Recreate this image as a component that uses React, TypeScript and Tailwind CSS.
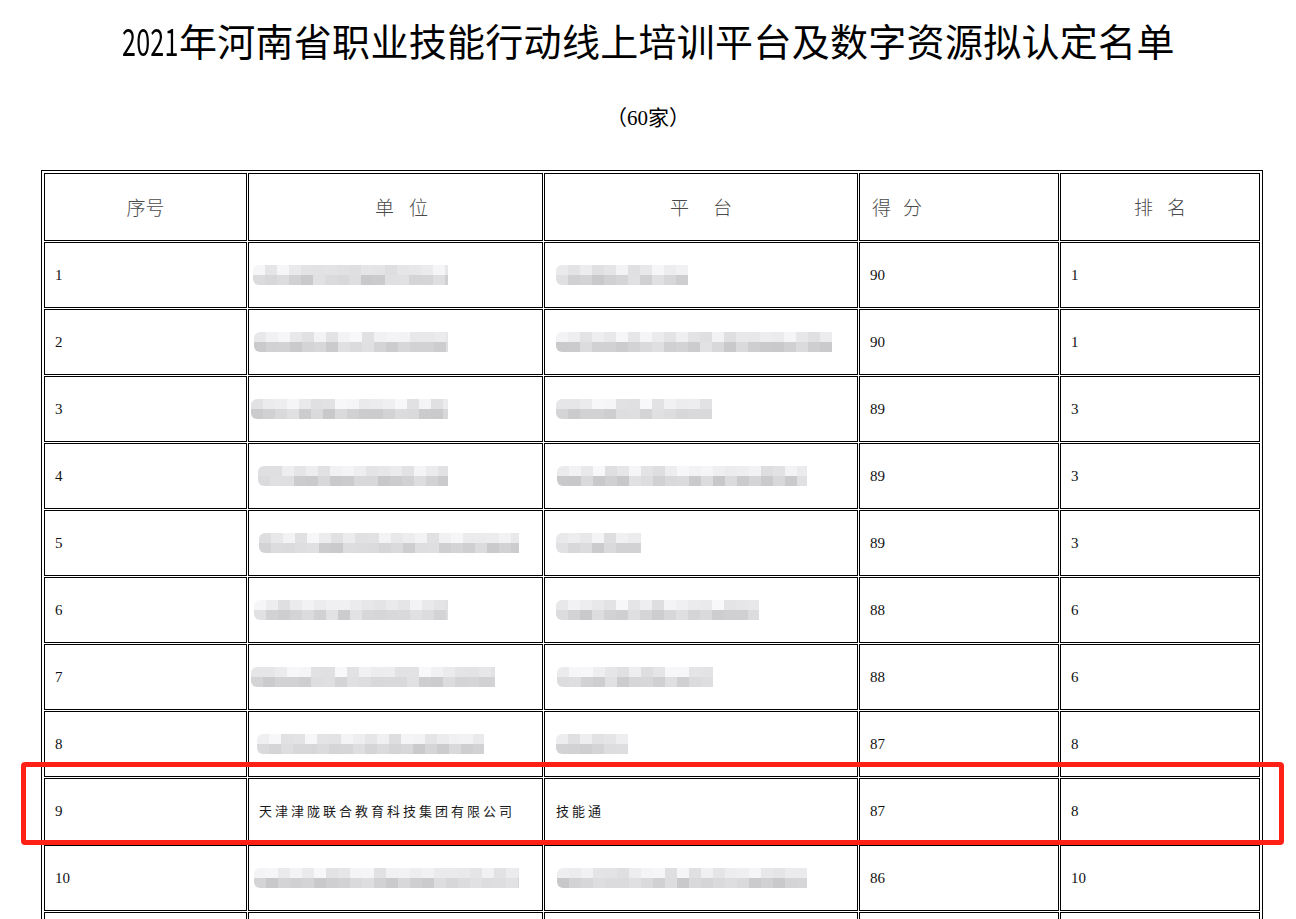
import React from 'react';

type Bar = { x: number; w: number };
type Row = { n: string; unit?: Bar; plat?: Bar; unitText?: string; platText?: string; score: string; rank: string };

const rows: Row[] = [
  { n: '1', unit: { x: 4, w: 195 }, plat: { x: 11, w: 132 }, score: '90', rank: '1' },
  { n: '2', unit: { x: 5, w: 194 }, plat: { x: 11, w: 276 }, score: '90', rank: '1' },
  { n: '3', unit: { x: 2, w: 197 }, plat: { x: 11, w: 156 }, score: '89', rank: '3' },
  { n: '4', unit: { x: 9, w: 190 }, plat: { x: 12, w: 250 }, score: '89', rank: '3' },
  { n: '5', unit: { x: 10, w: 260 }, plat: { x: 11, w: 85 }, score: '89', rank: '3' },
  { n: '6', unit: { x: 5, w: 194 }, plat: { x: 11, w: 203 }, score: '88', rank: '6' },
  { n: '7', unit: { x: 2, w: 244 }, plat: { x: 12, w: 156 }, score: '88', rank: '6' },
  { n: '8', unit: { x: 8, w: 227 }, plat: { x: 11, w: 72 }, score: '87', rank: '8' },
  { n: '9', unitText: '天津津陇联合教育科技集团有限公司', platText: '技能通', score: '87', rank: '8' },
  { n: '10', unit: { x: 5, w: 265 }, plat: { x: 12, w: 250 }, score: '86', rank: '10' },
];

// pixelated redaction, like the mosaic over the names
function Smudge({ bar, seed }: { bar: Bar; seed: number }) {
  const count = Math.ceil(bar.w / 12);
  const shade = (i: number, row: number) => {
    const v = Math.abs(Math.sin(seed * 12.9898 + i * 78.233 + row * 37.719) * 43758.5453) % 1;
    const base = row === 0 ? 222 : 200;
    const g = Math.round(base + v * 26);
    return `rgb(${g},${g},${Math.min(255, g + 3)})`;
  };
  return (
    <div className="flex flex-col overflow-hidden rounded-l-[6px] blur-[0.4px]" style={{ width: bar.w, marginLeft: bar.x }}>
      {[0, 1].map((row) => (
        <div key={row} className="flex h-[10px]">
          {Array.from({ length: count }).map((_, i) => (
            <div key={i} className="h-full w-[12px] shrink-0" style={{ background: shade(i, row) }} />
          ))}
        </div>
      ))}
    </div>
  );
}

const cell = 'border border-black flex items-center';
const num = "font-['Liberation_Serif',serif] text-[15px] text-[#111]";
const cjkSmall = "font-['Noto_Sans_CJK_SC',sans-serif] text-[13px] tracking-[3px] text-[#1a1a1a]";
const headText = "font-['Noto_Sans_CJK_SC',sans-serif] font-light text-[19px] text-[#4a4a4a]";

export default function App() {
  return (
    <div className="relative min-h-[919px] bg-white">
      {/* Title */}
      <h1 className="pt-[17px] text-center font-['Noto_Sans_CJK_SC',sans-serif] text-[38px] font-normal leading-[46px] tracking-[0.3px] text-black">
        <span className="-ml-[28px] inline-block origin-right scale-x-[0.66]">2021</span>
        年河南省职业技能行动线上培训平台及数字资源拟认定名单
      </h1>
      <p className="mt-[40px] text-center font-['Liberation_Serif','Noto_Sans_CJK_SC',serif] text-[21px] leading-[30px] text-black">
        （60家）
      </p>

      {/* Table */}
      <div className="ml-[41px] mt-[37px] w-[1222px] border border-black p-[2px]">
        <div className="grid grid-cols-[203px_295px_314px_200px_200px] gap-[1px]">
          <div className={`${cell} h-[68px] justify-center`}>
            <span className={headText}>序号</span>
          </div>
          <div className={`${cell} h-[68px] justify-center pl-[12px]`}>
            <span className={headText}>单</span>
            <span className={`${headText} ml-[15px]`}>位</span>
          </div>
          <div className={`${cell} h-[68px] justify-center`}>
            <span className={headText}>平</span>
            <span className={`${headText} ml-[24px]`}>台</span>
          </div>
          <div className={`${cell} h-[68px] pl-[12px]`}>
            <span className={headText}>得</span>
            <span className={`${headText} ml-[12px]`}>分</span>
          </div>
          <div className={`${cell} h-[68px] justify-center`}>
            <span className={headText}>排</span>
            <span className={`${headText} ml-[14px]`}>名</span>
          </div>

          {rows.map((r, idx) => (
            <React.Fragment key={r.n}>
              <div className={`${cell} h-[66px] pl-[10px]`}>
                <span className={num}>{r.n}</span>
              </div>
              <div className={`${cell} h-[66px]`}>
                {r.unit ? <Smudge bar={r.unit} seed={idx * 3 + 1} /> : <span className={`${cjkSmall} pl-[10px]`}>{r.unitText}</span>}
              </div>
              <div className={`${cell} h-[66px]`}>
                {r.plat ? <Smudge bar={r.plat} seed={idx * 7 + 5} /> : <span className={`${cjkSmall} pl-[11px]`}>{r.platText}</span>}
              </div>
              <div className={`${cell} h-[66px] pl-[10px]`}>
                <span className={num}>{r.score}</span>
              </div>
              <div className={`${cell} h-[66px] pl-[10px]`}>
                <span className={num}>{r.rank}</span>
              </div>
            </React.Fragment>
          ))}

          {/* next row, below the fold */}
          <div className={`${cell} h-[66px]`} />
          <div className={`${cell} h-[66px]`} />
          <div className={`${cell} h-[66px]`} />
          <div className={`${cell} h-[66px]`} />
          <div className={`${cell} h-[66px]`} />
        </div>
      </div>

      {/* red highlight over row 9 */}
      <div className="absolute left-[21px] top-[762px] h-[83px] w-[1263px] rounded-[4px] border-[5px] border-[#ff2016]" />
    </div>
  );
}
